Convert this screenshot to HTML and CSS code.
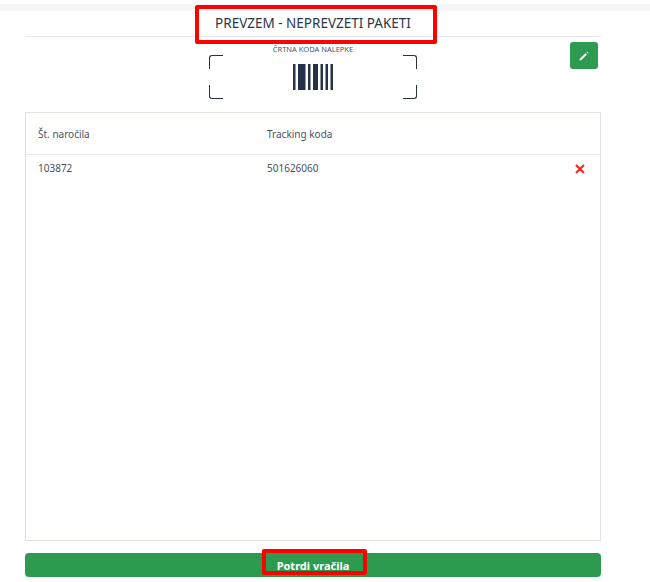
FILE: index.html
```html
<!DOCTYPE html>
<html lang="en">
<head>
  <meta charset="UTF-8" />
  <title>Prevzem - neprevzeti paketi</title>
  <link rel="stylesheet" href="styles.css">
</head>
<body>
  <div class="top-strip"></div>

  <div class="page">
    <div class="page-title">
      <h1>PREVZEM - NEPREVZETI PAKETI</h1>
    </div>

    <!-- Scanner -->
    <div class="scan-row">
      <div class="scanner">
        <span class="corner tl"></span>
        <span class="corner tr"></span>
        <span class="corner bl"></span>
        <span class="corner br"></span>
        <p class="scan-label">ČRTNA KODA NALEPKE</p>
        <svg class="barcode" width="40" height="26" viewBox="0 0 40 26">
          <rect x="0" width="2.5" height="26"/>
          <rect x="5" width="7.5" height="26"/>
          <rect x="15" width="2.5" height="26"/>
          <rect x="20" width="5" height="26"/>
          <rect x="27.5" width="2.5" height="26"/>
          <rect x="32.5" width="2.5" height="26"/>
          <rect x="37.5" width="2.5" height="26"/>
        </svg>
      </div>
      <button class="edit-btn" aria-label="Uredi">
        <svg width="12" height="12" viewBox="0 0 12 12">
          <path d="M1.5 10.5 L2 8.6 L7.6 3 L9 4.4 L3.4 10 Z" fill="#fff"/>
          <path d="M8.5 2.1 L9.2 1.5 L10.5 2.8 L9.9 3.5 Z" fill="#fff"/>
        </svg>
      </button>
    </div>

    <!-- Table -->
    <div class="table-container">
      <table>
        <thead>
          <tr>
            <th class="col-order">Št. naročila</th>
            <th>Tracking koda</th>
            <th class="col-remove"></th>
          </tr>
        </thead>
        <tbody>
          <tr>
            <td>103872</td>
            <td>501626060</td>
            <td class="col-remove">
              <svg class="remove-icon" width="10" height="10" viewBox="0 0 10 10">
                <path d="M1 1 L9 9 M9 1 L1 9" stroke="#f5281e" stroke-width="2.2" fill="none"/>
              </svg>
            </td>
          </tr>
        </tbody>
      </table>
    </div>

    <button class="confirm-btn">Potrdi vračila</button>
  </div>

  <!-- Annotations on top of the screenshot -->
  <div class="mark mark-title"></div>
  <div class="mark mark-confirm"></div>
</body>
</html>
```

FILE: styles.css
```css
* {
  box-sizing: border-box;
  font-family: "Noto Sans", "Open Sans", sans-serif;
}

body {
  margin: 0;
  background: white;
  position: relative;
}

.top-strip {
  height: 7px;
  margin-top: 4px;
  background: #f5f6f8;
}

.page {
  padding: 0 49px 0 25px;
}

.page-title {
  height: 26px;
  border-bottom: 1px solid #e4e7ec;
}

.page-title h1 {
  margin: 0;
  padding-top: 2px;
  font-size: 13.5px;
  line-height: 20px;
  font-weight: 400;
  color: #2b3648;
  text-align: center;
}

/* Scanner */
.scan-row {
  display: grid;
  grid-template-columns: 1fr 208px 1fr;
  height: 75px;
}

.scanner {
  grid-column: 2;
  position: relative;
  height: 44px;
  margin-top: 18px;
  display: flex;
  justify-content: center;
}

.scan-label {
  position: absolute;
  top: -11px;
  left: 0;
  right: 0;
  margin: 0;
  font-size: 7.5px;
  line-height: 10px;
  color: #4a5361;
  text-align: center;
}

.barcode {
  margin-top: 9px;
  fill: #25324a;
}

.corner {
  position: absolute;
  width: 14px;
  height: 14px;
  border: 0 solid #25324a;
}

.corner.tl { top: 0; left: 0; border-width: 1px 0 0 1px; border-top-left-radius: 3px; }
.corner.tr { top: 0; right: 0; border-width: 1px 1px 0 0; border-top-right-radius: 3px; }
.corner.bl { bottom: 0; left: 0; border-width: 0 0 1px 1px; border-bottom-left-radius: 3px; }
.corner.br { bottom: 0; right: 0; border-width: 0 1px 1px 0; border-bottom-right-radius: 3px; }

.edit-btn {
  grid-column: 3;
  justify-self: end;
  width: 28px;
  height: 27px;
  margin: 5px 3px 0 0;
  padding: 0;
  display: flex;
  align-items: center;
  justify-content: center;
  background: #2c9a4f;
  border: none;
  border-radius: 3px;
}

/* Table */
.table-container {
  height: 429px;
  border: 1px solid #dfe1e8;
}

table {
  width: 100%;
  border-collapse: collapse;
  font-size: 10px;
  color: #4a5361;
}

th {
  height: 41px;
  padding: 2px 0 0 12px;
  font-weight: 400;
  text-align: left;
  border-bottom: 1px solid #e8eaef;
}

td {
  height: 28px;
  padding: 0 0 0 12px;
}

.col-order {
  width: 229px;
}

.col-remove {
  width: 40px;
  padding-left: 15px;
}

.remove-icon {
  display: block;
  margin-top: 2px;
}

/* Confirm */
.confirm-btn {
  display: block;
  width: 100%;
  height: 24px;
  margin-top: 12px;
  padding: 0;
  background: #2c9a4f;
  color: white;
  font-size: 11px;
  font-weight: 700;
  border: none;
  border-radius: 4px;
}

.mark {
  position: absolute;
  border: 4px solid #fe0000;
  border-radius: 2px;
}

.mark-title {
  left: 195px;
  top: 5px;
  width: 242px;
  height: 39px;
}

.mark-confirm {
  left: 262px;
  top: 549px;
  width: 105px;
  height: 26px;
}
```
